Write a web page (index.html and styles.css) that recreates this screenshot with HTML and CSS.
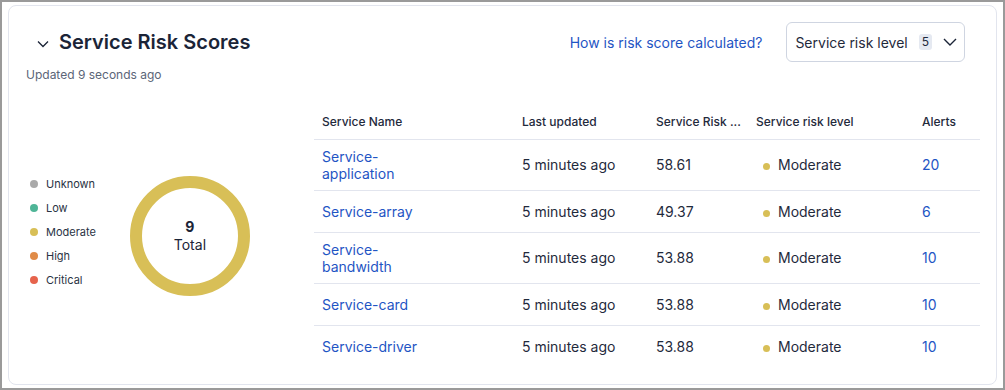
FILE: index.html
```html
<!DOCTYPE html>
<html lang="en">
<head>
    <meta charset="UTF-8">
    <meta name="viewport" content="width=device-width, initial-scale=1.0">
    <title>Service Risk Scores</title>
    <link rel="stylesheet" href="styles.css">
</head>
<body>
    <div class="frame">
        <section class="card">
            <header class="card-head">
                <div class="title-block">
                    <h2 class="title">
                        <svg class="collapse" width="12" height="8" viewBox="0 0 12 8"><path d="M1 1.5l5 5 5-5" fill="none" stroke="#1b2437" stroke-width="1.3"/></svg>
                        Service Risk Scores
                    </h2>
                    <p class="updated">Updated 9 seconds ago</p>
                </div>
                <div class="actions">
                    <a href="#" class="help-link">How is risk score calculated?</a>
                    <button class="filter">
                        Service risk level
                        <span class="badge">5</span>
                        <svg width="14" height="8" viewBox="0 0 14 8"><path d="M1 1l6 6 6-6" fill="none" stroke="#1b2437" stroke-width="1.4"/></svg>
                    </button>
                </div>
            </header>

            <div class="card-body">
                <div class="summary">
                    <ul class="legend">
                        <li><span class="dot unknown"></span>Unknown</li>
                        <li><span class="dot low"></span>Low</li>
                        <li><span class="dot moderate"></span>Moderate</li>
                        <li><span class="dot high"></span>High</li>
                        <li><span class="dot critical"></span>Critical</li>
                    </ul>
                    <div class="donut">
                        <svg width="124" height="124" viewBox="0 0 124 124">
                            <circle cx="62" cy="62" r="54" fill="none" stroke="#d8bf57" stroke-width="12"/>
                        </svg>
                        <div class="donut-label">
                            <strong>9</strong>
                            <span>Total</span>
                        </div>
                    </div>
                </div>

                <div class="table-wrap">
                    <table class="risk-table">
                        <colgroup>
                            <col class="col-name">
                            <col class="col-updated">
                            <col class="col-score">
                            <col class="col-level">
                            <col class="col-alerts">
                        </colgroup>
                        <thead>
                            <tr>
                                <th>Service Name</th>
                                <th>Last updated</th>
                                <th title="Service Risk Score">Service Risk ...</th>
                                <th>Service risk level</th>
                                <th>Alerts</th>
                            </tr>
                        </thead>
                        <tbody>
                            <tr>
                                <td><a href="#" class="name">Service-application</a></td>
                                <td>5 minutes ago</td>
                                <td>58.61</td>
                                <td><span class="dot moderate"></span>Moderate</td>
                                <td><a href="#">20</a></td>
                            </tr>
                            <tr>
                                <td><a href="#" class="name">Service-array</a></td>
                                <td>5 minutes ago</td>
                                <td>49.37</td>
                                <td><span class="dot moderate"></span>Moderate</td>
                                <td><a href="#">6</a></td>
                            </tr>
                            <tr>
                                <td><a href="#" class="name">Service-bandwidth</a></td>
                                <td>5 minutes ago</td>
                                <td>53.88</td>
                                <td><span class="dot moderate"></span>Moderate</td>
                                <td><a href="#">10</a></td>
                            </tr>
                            <tr>
                                <td><a href="#" class="name">Service-card</a></td>
                                <td>5 minutes ago</td>
                                <td>53.88</td>
                                <td><span class="dot moderate"></span>Moderate</td>
                                <td><a href="#">10</a></td>
                            </tr>
                            <tr>
                                <td><a href="#" class="name">Service-driver</a></td>
                                <td>5 minutes ago</td>
                                <td>53.88</td>
                                <td><span class="dot moderate"></span>Moderate</td>
                                <td><a href="#">10</a></td>
                            </tr>
                        </tbody>
                    </table>
                </div>
            </div>
        </section>
    </div>
</body>
</html>
```

FILE: styles.css
```css
/* General */
* {
    box-sizing: border-box;
}

body {
    margin: 0;
    font-family: 'Inter', 'Noto Sans', sans-serif;
    color: #1f2a3c;
    background: #ffffff;
}

.frame {
    height: 390px;
    border: 2px solid #9a9a9a;
    padding: 3px 6px 3px 6px;
}

.card {
    height: 100%;
    border: 1px solid #e2e5ee;
    border-radius: 8px;
    padding: 16px 16px 0 17px;
}

/* Header */
.card-head {
    display: flex;
    justify-content: space-between;
    align-items: flex-start;
}

.title {
    display: flex;
    align-items: center;
    height: 40px;
    margin: 0;
    font-size: 20px;
    font-weight: 600;
    color: #1b2437;
}

.collapse {
    margin: 4px 10px 0 11px;
}

.updated {
    margin: 5px 0 0;
    font-size: 12px;
    line-height: 16px;
    color: #5b6577;
}

.actions {
    display: flex;
    align-items: center;
    gap: 24px;
    margin-right: 15px;
}

.help-link {
    font-size: 14px;
    color: #1f55c4;
    text-decoration: none;
}

.filter {
    display: flex;
    align-items: center;
    height: 40px;
    padding: 0 7px 0 8px;
    border: 1px solid #cfd5e1;
    border-radius: 6px;
    background: #ffffff;
    font-family: inherit;
    font-size: 14px;
    color: #1f2a3c;
}

.badge {
    margin: 0 11px 0 11px;
    padding: 1px 3px;
    border-radius: 3px;
    background: #e5e9f1;
    font-size: 12px;
    line-height: 14px;
}

/* Body */
.card-body {
    display: flex;
    align-items: center;
    margin-top: 22px;
}

.summary {
    flex: 0 0 288px;
    display: flex;
    align-items: center;
    padding-left: 4px;
}

.legend {
    list-style: none;
    margin: 0 32px 8px 0;
    padding: 0;
    font-size: 11px;
    color: #2a3344;
}

.legend li {
    display: flex;
    align-items: center;
    height: 24px;
}

.dot {
    display: inline-block;
    width: 8px;
    height: 8px;
    border-radius: 50%;
    margin-right: 8px;
}

.unknown { background: #a9a9a9; }
.low { background: #4fb597; }
.moderate { background: #d8bf57; }
.high { background: #e08b48; }
.critical { background: #e6634c; }

.donut {
    position: relative;
    width: 124px;
    height: 124px;
}

.donut svg {
    display: block;
}

.donut-label {
    position: absolute;
    inset: 0;
    display: flex;
    flex-direction: column;
    align-items: center;
    justify-content: center;
    font-size: 14px;
    line-height: 18px;
    color: #1b2437;
}

/* Table */
.table-wrap {
    flex: 1;
}

.risk-table {
    width: 100%;
    border-collapse: collapse;
    table-layout: fixed;
}

.col-name { width: 200px; }
.col-updated { width: 134px; }
.col-score { width: 100px; }
.col-level { width: 166px; }

.risk-table th {
    height: 34px;
    padding: 0 8px;
    border-bottom: 1px solid #e2e5ee;
    text-align: left;
    font-size: 12px;
    font-weight: 500;
    white-space: nowrap;
}

.risk-table td {
    height: 42px;
    padding: 8px;
    border-bottom: 1px solid #e2e5ee;
    font-size: 14px;
    line-height: 17px;
    vertical-align: middle;
}

.risk-table tbody tr:last-child td {
    border-bottom: none;
}

.risk-table td:nth-child(4) {
    padding-left: 15px;
}

.risk-table td .dot {
    width: 7px;
    height: 7px;
}

.risk-table a {
    color: #1f55c4;
    text-decoration: none;
}

.name {
    display: inline-block;
    max-width: 110px;
}
```
